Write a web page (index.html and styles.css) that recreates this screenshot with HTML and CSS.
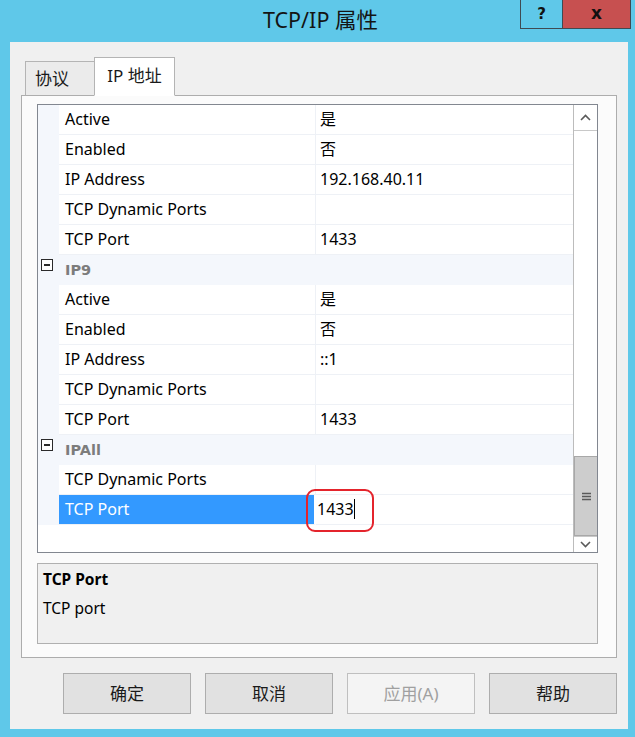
FILE: index.html
```html
<!DOCTYPE html>
<html>
<head>
<meta charset="utf-8">
<link rel="stylesheet" href="styles.css">
</head>
<body>
<div class="window">
  <div class="titlebar">
    <div></div>
    <div class="title">TCP/IP 属性</div>
    <div class="caption-btns">
      <div class="cap help">?</div>
      <div class="cap close">x</div>
    </div>
  </div>
  <div class="client">
    <div class="tabs">
      <div class="tab first">协议</div>
      <div class="tab active">IP 地址</div>
    </div>
    <div class="panel">
      <div class="grid">
        <div class="list">
          <div class="row"><div class="m"></div><div class="name">Active</div><div class="val">是</div></div>
          <div class="row"><div class="m"></div><div class="name">Enabled</div><div class="val">否</div></div>
          <div class="row"><div class="m"></div><div class="name">IP Address</div><div class="val">192.168.40.11</div></div>
          <div class="row"><div class="m"></div><div class="name">TCP Dynamic Ports</div><div class="val"></div></div>
          <div class="row"><div class="m"></div><div class="name">TCP Port</div><div class="val">1433</div></div>
          <div class="cat"><div class="m"><span class="minus"></span></div><div class="catname">IP9</div></div>
          <div class="row"><div class="m"></div><div class="name">Active</div><div class="val">是</div></div>
          <div class="row"><div class="m"></div><div class="name">Enabled</div><div class="val">否</div></div>
          <div class="row"><div class="m"></div><div class="name">IP Address</div><div class="val">::1</div></div>
          <div class="row"><div class="m"></div><div class="name">TCP Dynamic Ports</div><div class="val"></div></div>
          <div class="row"><div class="m"></div><div class="name">TCP Port</div><div class="val">1433</div></div>
          <div class="cat"><div class="m"><span class="minus"></span></div><div class="catname">IPAll</div></div>
          <div class="row"><div class="m"></div><div class="name">TCP Dynamic Ports</div><div class="val"></div></div>
          <div class="row sel"><div class="m"></div><div class="name">TCP Port</div><div class="val edit">1433<span class="caret"></span><span class="ring"></span></div></div>
        </div>
        <div class="vscroll">
          <div class="sbtn up"><svg width="11" height="7" viewBox="0 0 11 7"><polyline points="1,6 5.5,1.5 10,6" fill="none" stroke="#5a5a5a" stroke-width="1.6"/></svg></div>
          <div class="track"></div>
          <div class="thumb"><svg width="9" height="9" viewBox="0 0 9 9"><path d="M0 1.5H9M0 4.5H9M0 7.5H9" stroke="#5a5a5a" stroke-width="1.3"/></svg></div>
          <div class="sbtn down"><svg width="11" height="7" viewBox="0 0 11 7"><polyline points="1,1 5.5,5.5 10,1" fill="none" stroke="#5a5a5a" stroke-width="1.6"/></svg></div>
        </div>
      </div>
      <div class="desc">
        <div class="desc-title">TCP Port</div>
        <div class="desc-text">TCP port</div>
      </div>
    </div>
    <div class="buttons">
      <div class="btn">确定</div>
      <div class="btn">取消</div>
      <div class="btn disabled">应用(A)</div>
      <div class="btn">帮助</div>
    </div>
  </div>
</div>
</body>
</html>
```
FILE: styles.css
```css
html, body {
  margin: 0;
  padding: 0;
}
body {
  background: #5fc8e9;
  font-family: "Noto Sans", "Noto Sans CJK SC", sans-serif;
  color: #000;
}
.window {
  width: 635px;
  height: 737px;
  display: flex;
  flex-direction: column;
}
.titlebar {
  height: 42px;
  flex: none;
  display: grid;
  grid-template-columns: 1fr auto 1fr;
}
.title {
  font-family: "Noto Sans", "Noto Sans CJK SC", sans-serif;
  font-size: 21.5px;
  line-height: 40px;
  color: #141414;
  padding-left: 6px;
}
.caption-btns {
  justify-self: end;
  align-self: start;
  display: flex;
  margin-right: 4px;
}
.cap {
  height: 29px;
  box-sizing: border-box;
  border: 1px solid #3f4a52;
  border-top: none;
  display: flex;
  align-items: center;
  justify-content: center;
  font-family: "DejaVu Sans", sans-serif;
  font-weight: bold;
  font-size: 15px;
  color: #111;
}
.help {
  width: 42px;
  border-right: none;
}
.close {
  width: 69px;
  background: #c75050;
  font-size: 17px;
  padding-bottom: 3px;
}
.client {
  flex: 1;
  margin: 0 7px 8px 10px;
  background: #f0f0f0;
  padding: 15px 11px 0 11px;
  display: flex;
  flex-direction: column;
}
.tabs {
  display: flex;
  align-items: flex-end;
  height: 39px;
  margin-left: 4px;
  margin-bottom: -1px;
  position: relative;
  z-index: 1;
}
.tab {
  height: 35px;
  box-sizing: border-box;
  width: 70px;
  border: 1px solid #b4b4b4;
  border-bottom: 1px solid #adadad;
  background: #ebebeb;
  font-size: 17px;
  line-height: 33px;
  text-align: center;
  color: #1a1a1a;
}
.tab.first {
  text-align: left;
  padding-left: 9px;
}
.tab.active {
  height: 39px;
  width: 81px;
  margin-left: -1px;
  background: #ffffff;
  border-bottom-color: #ffffff;
  line-height: 35px;
}
.panel {
  height: 563px;
  box-sizing: border-box;
  border: 1px solid #adadad;
  background: #fbfbfb;
  padding: 8px 18px 13px 15px;
  display: flex;
  flex-direction: column;
}
.grid {
  height: 449px;
  box-sizing: border-box;
  border: 1px solid #828790;
  background: #fff;
  display: flex;
}
.list {
  width: 535px;
  display: flex;
  flex-direction: column;
}
.row, .cat {
  height: 30px;
  display: flex;
  flex: none;
}
.m {
  width: 21px;
  flex: none;
  background: #f4f7fc;
  position: relative;
}
.name {
  width: 257px;
  flex: none;
  box-sizing: border-box;
  border-right: 1px solid #eef1f6;
  border-bottom: 1px solid #eef1f6;
  padding-left: 6px;
  font-size: 16px;
  line-height: 29px;
  color: #000;
  white-space: nowrap;
}
.val {
  flex: 1;
  box-sizing: border-box;
  border-bottom: 1px solid #eef1f6;
  padding-left: 4px;
  font-size: 16px;
  line-height: 29px;
  white-space: nowrap;
  position: relative;
}
.cat {
  background: #f4f7fc;
}
.minus {
  position: absolute;
  left: 3px;
  top: 4px;
  width: 10px;
  height: 10px;
  border: 1.5px solid #2a2a2a;
  background: #fff;
}
.minus::after {
  content: "";
  position: absolute;
  left: 2px;
  top: 4px;
  width: 6px;
  height: 1.5px;
  background: #2a2a2a;
}
.catname {
  padding-left: 6px;
  font-family: "DejaVu Sans", sans-serif;
  font-weight: bold;
  font-size: 14.5px;
  line-height: 31px;
  color: #7c7c7c;
}
.row.sel .name {
  background: #3399ff;
  color: #fff;
  border-right: 2px solid #fff;
}
.val.edit {
  padding-left: 1px;
}
.caret {
  display: inline-block;
  width: 1px;
  height: 20px;
  background: #000;
  vertical-align: middle;
  margin-top: -3px;
}
.ring {
  position: absolute;
  left: -10px;
  top: -6px;
  width: 68px;
  height: 43px;
  box-sizing: border-box;
  border: 2px solid #e4242c;
  border-radius: 9px;
}
.vscroll {
  width: 24px;
  flex: none;
  display: flex;
  flex-direction: column;
  border-left: 1px solid #bcbcbc;
  box-sizing: border-box;
}
.sbtn {
  display: flex;
  align-items: center;
  justify-content: center;
  background: #fff;
  flex: none;
}
.sbtn.up {
  height: 25px;
  border-bottom: 1px solid #c8c8c8;
}
.sbtn.down {
  height: 15px;
  border-top: 1px solid #c8c8c8;
}
.track {
  flex: 1;
  background: #fff;
}
.thumb {
  height: 80px;
  box-sizing: border-box;
  background: #cdcdcd;
  border: 1px solid #a8a8a8;
  border-right: none;
  display: flex;
  align-items: center;
  justify-content: center;
  flex: none;
}
.desc {
  margin-top: 10px;
  height: 81px;
  box-sizing: border-box;
  border: 1px solid #b0b0b0;
  background: #f0f0f0;
  padding: 3px 0 0 5px;
}
.desc-title {
  font-weight: bold;
  font-size: 15.5px;
  line-height: 24px;
  color: #000;
}
.desc-text {
  font-size: 15.5px;
  line-height: 34px;
  color: #000;
}
.buttons {
  margin-top: 15px;
  display: flex;
  justify-content: flex-end;
  gap: 14px;
}
.btn {
  width: 128px;
  height: 41px;
  box-sizing: border-box;
  border: 1px solid #adadad;
  background: #e1e1e1;
  font-size: 17px;
  line-height: 39px;
  text-align: center;
  color: #1a1a1a;
}
.btn.disabled {
  background: #f4f4f4;
  border-color: #bfbfbf;
  color: #a0a0a0;
}
```
